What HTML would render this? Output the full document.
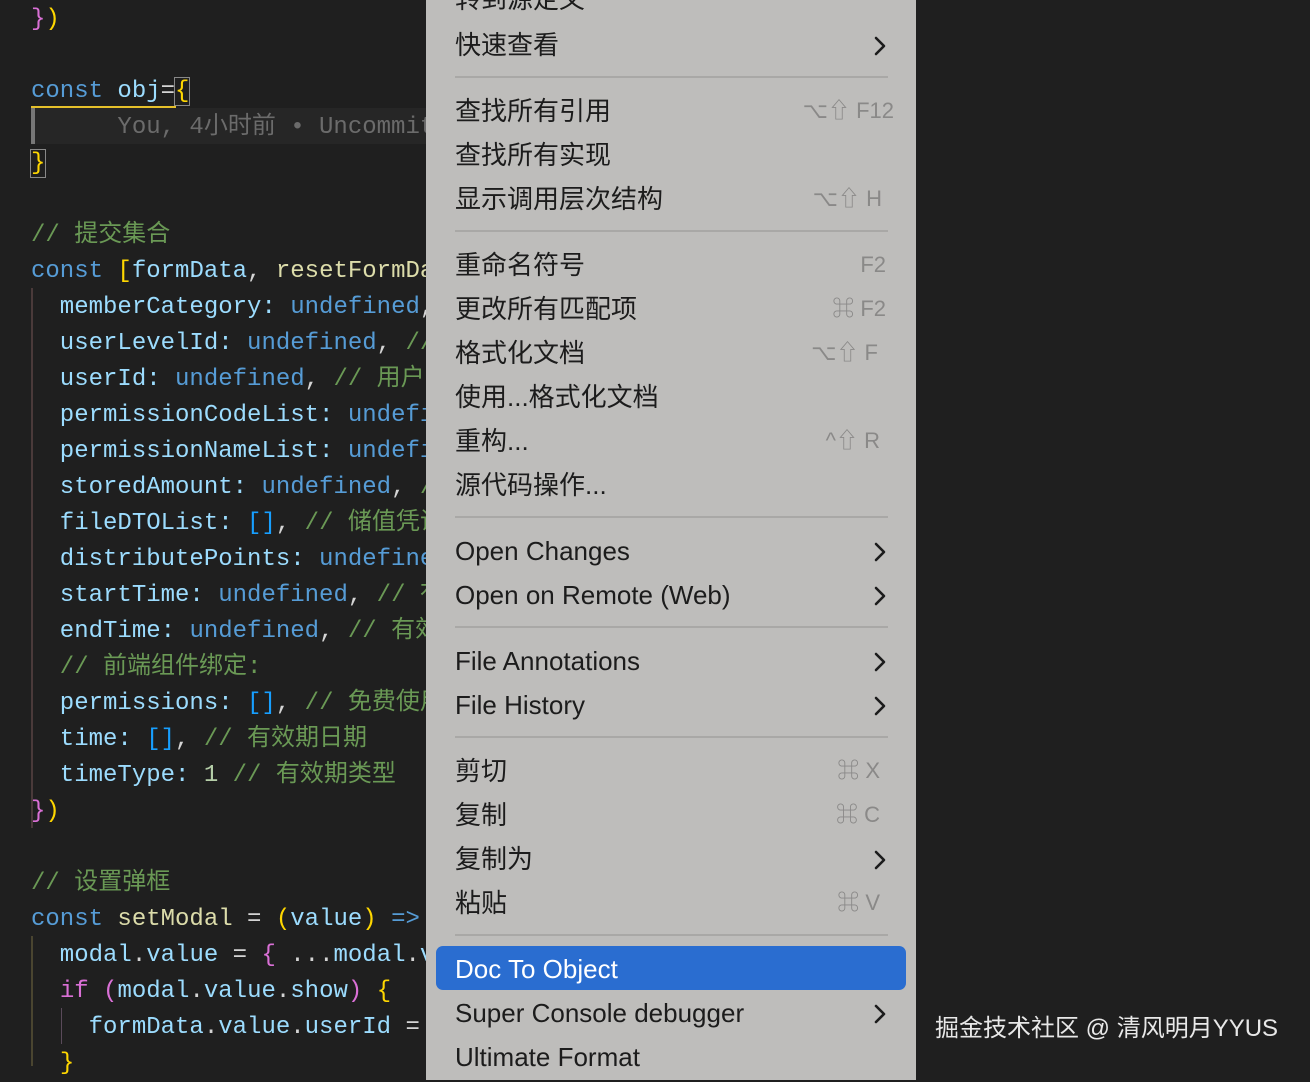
<!DOCTYPE html>
<html><head><meta charset="utf-8"><style>
html,body{margin:0;padding:0;width:1310px;height:1066px;overflow:hidden;background:#1f1f1f}
.code{position:absolute;left:0;top:0;width:430px;height:1066px;font-family:"Liberation Mono","Noto Sans CJK SC",monospace;font-size:24px;}
.l{position:absolute;left:31px;height:36px;line-height:36px;white-space:pre;color:#9cdcfe;margin-top:3px}
.k{color:#569cd6}.v{color:#9cdcfe}.f{color:#dcdcaa}.c{color:#6a9955}.y{color:#ffd700}.p{color:#da70d6}.w{color:#d4d4d4}.n{color:#b5cea8}.g{color:#6b6b6b}.b{color:#179fff}
.menu{position:absolute;left:426px;top:-10px;width:490px;height:1090px;background:#bebdbb;font-family:"Liberation Sans","Noto Sans CJK SC",sans-serif;color:#1c1c1c;font-size:26px}
.it{position:absolute;left:29px;right:0;height:44px;line-height:44px}
.sc{position:absolute;right:22px;top:0;color:#8a8988;font-size:22px}
.ar{position:absolute;right:30px;top:13px;width:12px;height:20px}
.sep{position:absolute;left:29px;width:433px;height:2px;background:#a9a8a6}
.hl{position:absolute;left:10px;width:470px;height:44px;background:#2a6dd0;border-radius:7px}
.wm{position:absolute;left:935px;top:1008px;color:#e8e8e8;font-family:"Liberation Sans","Noto Sans CJK SC",sans-serif;font-size:24px}
</style></head><body>
<svg width="0" height="0" style="position:absolute"><defs><symbol id="ch" viewBox="0 0 12 20"><path d="M2 2 L10 10 L2 18" fill="none" stroke="#1c1c1c" stroke-width="2.6" stroke-linecap="round" stroke-linejoin="round"/></symbol></defs></svg>
<div class="code">
<div style="position:absolute;left:31px;top:108px;width:395px;height:36px;background:#262626"></div>
<div style="position:absolute;left:31px;top:106px;width:145px;height:2px;background:#e5c02a"></div>
<div style="position:absolute;left:31px;top:108px;width:4px;height:36px;background:#777"></div>
<div style="position:absolute;left:31px;top:288px;width:2px;height:540px;background:#4a3a3a"></div>
<div style="position:absolute;left:31px;top:936px;width:2px;height:130px;background:#4a4530"></div>
<div style="position:absolute;left:61px;top:1008px;width:1px;height:36px;background:#5a4a5a"></div>
<div class="l" style="top:-1px"><span class="p">}</span><span class="y">)</span></div>
<div class="l" style="top:71px"><span class="k">const</span> <span class="v">obj</span><span class="w">=</span><span class="y" style="outline:1px solid #888">{</span></div>
<div class="l g" style="top:107px">      You, 4小时前 • Uncommitted</div>
<div class="l" style="top:143px"><span class="y" style="outline:1px solid #888">}</span></div>
<div class="l c" style="top:215px">// 提交集合</div>
<div class="l" style="top:251px"><span class="k">const</span> <span class="y">[</span><span class="v">formData</span><span class="w">, </span><span class="f">resetFormData</span></div>
<div class="l" style="top:287px">  memberCategory: <span class="k">undefined</span><span class="w">, </span><span class="c">// 会员</span></div>
<div class="l" style="top:323px">  userLevelId: <span class="k">undefined</span><span class="w">, </span><span class="c">// 等级</span></div>
<div class="l" style="top:359px">  userId: <span class="k">undefined</span><span class="w">, </span><span class="c">// 用户</span></div>
<div class="l" style="top:395px">  permissionCodeList: <span class="k">undefined</span></div>
<div class="l" style="top:431px">  permissionNameList: <span class="k">undefined</span></div>
<div class="l" style="top:467px">  storedAmount: <span class="k">undefined</span><span class="w">, </span><span class="c">// 储值</span></div>
<div class="l" style="top:503px">  fileDTOList: <span class="b">[]</span><span class="w">, </span><span class="c">// 储值凭证</span></div>
<div class="l" style="top:539px">  distributePoints: <span class="k">undefined</span></div>
<div class="l" style="top:575px">  startTime: <span class="k">undefined</span><span class="w">, </span><span class="c">// 有效</span></div>
<div class="l" style="top:611px">  endTime: <span class="k">undefined</span><span class="w">, </span><span class="c">// 有效</span></div>
<div class="l c" style="top:647px">  // 前端组件绑定:</div>
<div class="l" style="top:683px">  permissions: <span class="b">[]</span><span class="w">, </span><span class="c">// 免费使用</span></div>
<div class="l" style="top:719px">  time: <span class="b">[]</span><span class="w">, </span><span class="c">// 有效期日期</span></div>
<div class="l" style="top:755px">  timeType: <span class="n">1</span> <span class="c">// 有效期类型</span></div>
<div class="l" style="top:791px"><span class="p">}</span><span class="y">)</span></div>
<div class="l c" style="top:863px">// 设置弹框</div>
<div class="l" style="top:899px"><span class="k">const</span> <span class="f">setModal</span><span class="w"> = </span><span class="y">(</span>value<span class="y">)</span> <span class="k">=&gt;</span></div>
<div class="l" style="top:935px">  modal<span class="w">.</span>value<span class="w"> = </span><span class="p">{</span><span class="w"> ...</span>modal<span class="w">.</span>value</div>
<div class="l" style="top:971px">  <span class="p">if</span> <span class="p">(</span>modal<span class="w">.</span>value<span class="w">.</span>show<span class="p">)</span> <span class="y">{</span></div>
<div class="l" style="top:1007px">    formData<span class="w">.</span>value<span class="w">.</span>userId<span class="w"> =</span></div>
<div class="l" style="top:1043px">  <span class="y">}</span></div>
</div>
<div class="menu">
<div class="it" style="top:-13px">转到源定义</div>
<div class="it" style="top:33px">快速查看<svg class="ar"><use href="#ch"/></svg></div>
<div class="sep" style="top:86px"></div>
<div class="it" style="top:99px">查找所有引用<span class="sc">⌥⇧ F12</span></div>
<div class="it" style="top:143px">查找所有实现</div>
<div class="it" style="top:187px">显示调用层次结构<span class="sc" style="right:34px">⌥⇧ H</span></div>
<div class="sep" style="top:240px"></div>
<div class="it" style="top:253px">重命名符号<span class="sc" style="right:30px">F2</span></div>
<div class="it" style="top:297px">更改所有匹配项<span class="sc" style="right:30px">⌘ F2</span></div>
<div class="it" style="top:341px">格式化文档<span class="sc" style="right:38px">⌥⇧ F</span></div>
<div class="it" style="top:385px">使用...格式化文档</div>
<div class="it" style="top:429px">重构...<span class="sc" style="right:36px">^⇧ R</span></div>
<div class="it" style="top:473px">源代码操作...</div>
<div class="sep" style="top:526px"></div>
<div class="it" style="top:539px">Open Changes<svg class="ar"><use href="#ch"/></svg></div>
<div class="it" style="top:583px">Open on Remote (Web)<svg class="ar"><use href="#ch"/></svg></div>
<div class="sep" style="top:636px"></div>
<div class="it" style="top:649px">File Annotations<svg class="ar"><use href="#ch"/></svg></div>
<div class="it" style="top:693px">File History<svg class="ar"><use href="#ch"/></svg></div>
<div class="sep" style="top:746px"></div>
<div class="it" style="top:759px">剪切<span class="sc" style="right:36px">⌘ X</span></div>
<div class="it" style="top:803px">复制<span class="sc" style="right:36px">⌘ C</span></div>
<div class="it" style="top:847px">复制为<svg class="ar"><use href="#ch"/></svg></div>
<div class="it" style="top:891px">粘贴<span class="sc" style="right:36px">⌘ V</span></div>
<div class="sep" style="top:944px"></div>
<div class="hl" style="top:956px"></div>
<div class="it" style="top:957px;color:#fff">Doc To Object</div>
<div class="it" style="top:1001px">Super Console debugger<svg class="ar"><use href="#ch"/></svg></div>
<div class="it" style="top:1045px">Ultimate Format</div>
</div>
<div class="wm">掘金技术社区 @ 清风明月YYUS</div>
</body></html>
